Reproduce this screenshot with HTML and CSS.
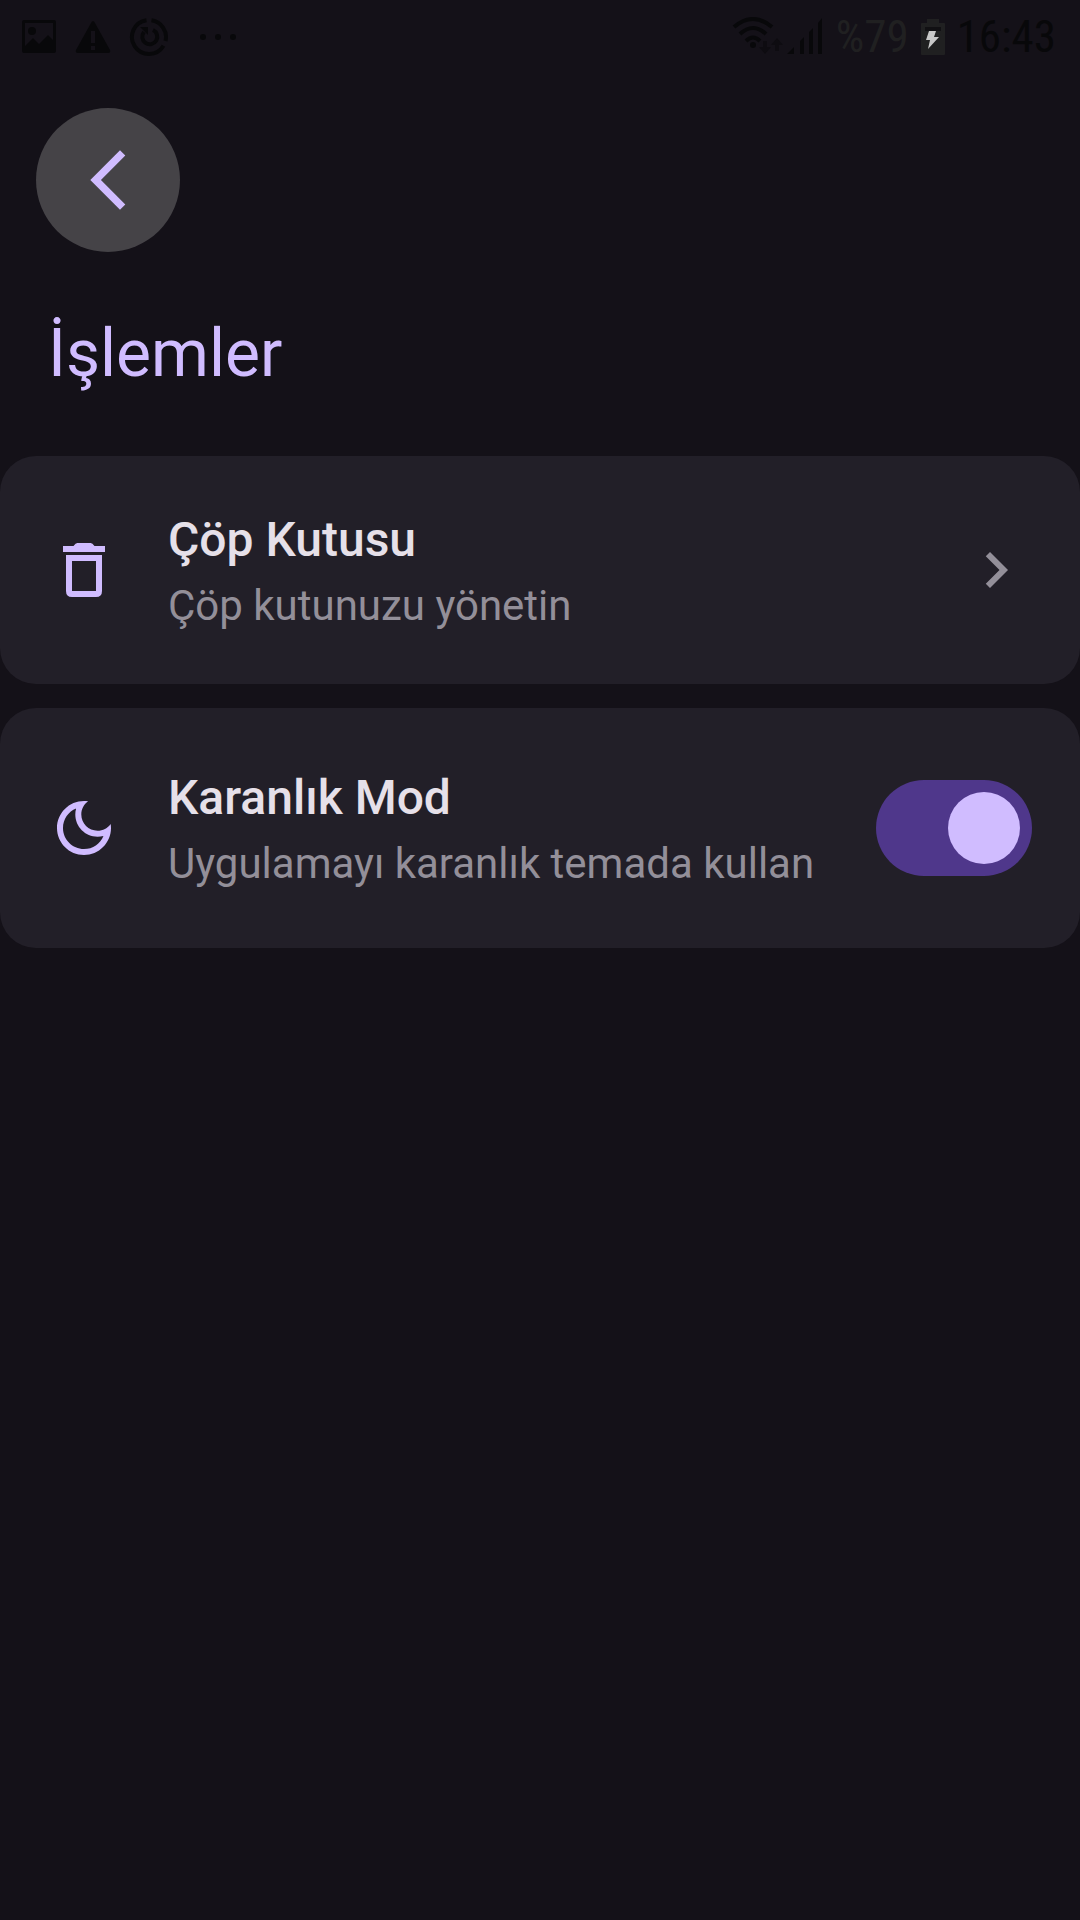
FILE: index.html
```html
<!DOCTYPE html>
<html lang="tr">
<head>
<meta charset="utf-8">
<meta name="viewport" content="width=device-width, initial-scale=1">
<title>İşlemler</title>
<link rel="stylesheet" href="styles.css">
</head>
<body>
<div class="status-bar">
  <div class="status-group">
    <svg class="status-icon" width="36" height="36" viewBox="0 0 36 36" aria-hidden="true">
      <path fill-rule="evenodd" d="M3 1h30q2 0 2 2v29q0 2-2 2H3q-2 0-2-2V3q0-2 2-2zM4 4v23l8-8 6 6 9-9 5 5V4z"/>
      <circle cx="11" cy="12" r="4"/>
    </svg>
    <svg class="status-icon" width="36" height="36" viewBox="0 0 36 36" aria-hidden="true">
      <path fill-rule="evenodd" d="M18 2q1 0 2 2l15 27q1 3-2 3H3q-3 0-2-3L16 4q1-2 2-2zM16 12v12h4V12zM16 27v4h4v-4z"/>
    </svg>
    <svg class="status-icon" width="40" height="40" viewBox="0 0 40 40" fill="none" stroke="currentColor" stroke-width="4" aria-hidden="true">
      <path d="M22.500 3.200A17 17 0 0 1 36.500 24M34.500 28.800A17 17 0 1 1 17.500 3.200"/>
      <path d="M24 13A7.500 7.500 0 1 1 15 15"/>
      <path d="M11 10h8v8z" fill="currentColor" stroke="none"/>
    </svg>
    <svg class="status-icon status-more" width="38" height="40" viewBox="0 0 38 40" aria-hidden="true">
      <circle cx="4" cy="20" r="3"/><circle cx="19" cy="20" r="3"/><circle cx="34" cy="20" r="3"/>
    </svg>
  </div>
  <div class="status-group status-group-end">
    <svg class="status-icon" width="92" height="40" viewBox="0 0 92 40" aria-hidden="true">
      <g fill="none" stroke="currentColor" stroke-width="4">
        <path d="M2 10Q21-6 40 10M8 17Q21 5 34 17M14 24Q21 17 28 24"/>
      </g>
      <circle cx="21" cy="28" r="3"/>
      <path d="M31 24h4v6h4l-6 7-6-7h4zM43 34h4v-6h4l-6-7-6 7h4z" opacity=".5"/>
      <path d="M55 37l7-7v7zM68 24l4-4v17h-4zM77 15l4-4v26h-4zM86 6l4-5v36h-4z"/>
    </svg>
    <span class="battery-level">%79</span>
    <svg class="battery" width="24" height="36" viewBox="0 0 24 36" aria-hidden="true">
      <path fill="#202021" d="M6 0h12v4h5q1 0 1 1v30q0 1-1 1H1q-1 0-1-1V5q0-1 1-1h5z"/>
      <path fill="#111013" d="M4 8h16v4H4z"/>
      <path fill="#c8c8c8" d="M8 12h7l-2 6h5L7 30l2-9H5z"/>
    </svg>
    <time class="clock">16:43</time>
  </div>
</div>

<header class="top-bar">
  <button class="back-button" type="button" aria-label="Geri">
    <svg width="72" height="72" viewBox="0 0 24 24" aria-hidden="true"><path d="M17.770 3.870L16 2.100 6.100 12l9.900 9.900 1.770-1.770L9.640 12z"/></svg>
  </button>
</header>

<main>
  <h1 class="page-title">İşlemler</h1>
  <div class="settings">
    <a class="card" href="#cop-kutusu">
      <svg class="card-icon" width="72" height="72" viewBox="0 0 24 24" aria-hidden="true">
        <path fill-rule="evenodd" d="M5 4h3.500Q9.200 3 9.800 3h4.400Q14.800 3 15.500 4H19v2H5zM6 7h12v12q0 2-2 2H8q-2 0-2-2zM8 9v10h8V9z"/>
      </svg>
      <span class="card-text">
        <span class="card-title">Çöp Kutusu</span>
        <span class="card-subtitle">Çöp kutunuzu yönetin</span>
      </span>
      <svg class="chevron" width="72" height="72" viewBox="0 0 24 24" aria-hidden="true"><path d="M8.590 16.590L13.170 12 8.590 7.410 10 6l6 6-6 6z"/></svg>
    </a>
    <label class="card" for="dark-mode">
      <svg class="card-icon" width="72" height="72" viewBox="0 0 24 24" aria-hidden="true">
        <path d="M9.370 5.510C9.190 6.150 9.100 6.820 9.100 7.500c0 4.080 3.320 7.400 7.400 7.400.68 0 1.350-.09 1.990-.27C17.450 17.190 14.930 19 12 19c-3.860 0-7-3.140-7-7 0-2.930 1.810-5.450 4.370-6.490zM12 3c-4.970 0-9 4.030-9 9s4.030 9 9 9 9-4.030 9-9c0-.46-.04-.92-.1-1.360-.98 1.370-2.580 2.260-4.400 2.260-2.980 0-5.400-2.420-5.400-5.400 0-1.810.89-3.420 2.260-4.400C12.920 3.040 12.460 3 12 3z"/>
      </svg>
      <span class="card-text">
        <span class="card-title">Karanlık Mod</span>
        <span class="card-subtitle">Uygulamayı karanlık temada kullan</span>
      </span>
      <input class="switch" id="dark-mode" type="checkbox" role="switch" checked>
    </label>
  </div>
</main>
</body>
</html>
```
FILE: styles.css
```css
:root {
  --background: #141118;
  --surface: #221f28;
  --primary: #d0bcff;
  --primary-container: #4f378b;
  --on-surface: #e6e0e9;
  --outline: #938f99;
  --status: #08080a;
}

* {
  box-sizing: border-box;
}

body {
  margin: 0;
  min-height: 100vh;
  background: var(--background);
  color: var(--on-surface);
  font-family: Roboto, sans-serif;
}

svg {
  display: block;
  flex: none;
  fill: currentColor;
}

svg[fill="none"] {
  fill: none;
}

.status-bar {
  display: flex;
  align-items: center;
  justify-content: space-between;
  height: 72px;
  padding: 2px 24px 0 21px;
  color: var(--status);
  font-family: "Roboto Condensed", "Liberation Sans Narrow", Roboto, sans-serif;
  font-size: 45px;
  line-height: 48px;
}

.status-group {
  display: flex;
  align-items: center;
  gap: 18px;
}

.status-more {
  margin-left: 12px;
}

.status-group-end {
  gap: 12px;
}

.battery-level {
  color: #202021;
}

.top-bar {
  display: flex;
  padding: 36px 36px 60px;
}

.back-button {
  display: grid;
  place-items: center;
  width: 144px;
  height: 144px;
  padding: 0;
  border: 0;
  border-radius: 50%;
  background: #454347;
  color: var(--primary);
}

.page-title {
  margin: 0 48px 60px;
  color: var(--primary);
  font-size: 66px;
  font-weight: 400;
  line-height: 84px;
}

.settings {
  display: grid;
  gap: 24px;
}

.card {
  display: flex;
  align-items: center;
  padding: 48px;
  border-radius: 36px;
  background: var(--surface);
  color: inherit;
  text-decoration: none;
}

.card-icon {
  margin-right: 48px;
  color: var(--primary);
}

.card-text {
  display: grid;
  flex: 1;
  min-width: 0;
}

.card-title {
  font-size: 48px;
  font-weight: 500;
  line-height: 72px;
}

.card-subtitle {
  color: var(--outline);
  font-size: 42px;
  line-height: 60px;
}

.chevron {
  color: var(--outline);
}

.switch {
  appearance: none;
  display: flex;
  align-items: center;
  flex: none;
  width: 156px;
  height: 96px;
  margin: 24px 0;
  padding: 0 12px;
  border-radius: 48px;
  background: #36343b;
}

.switch::before {
  content: "";
  width: 72px;
  height: 72px;
  border-radius: 50%;
  background: var(--outline);
}

.switch:checked {
  justify-content: flex-end;
  background: var(--primary-container);
}

.switch:checked::before {
  background: var(--primary);
}
```
